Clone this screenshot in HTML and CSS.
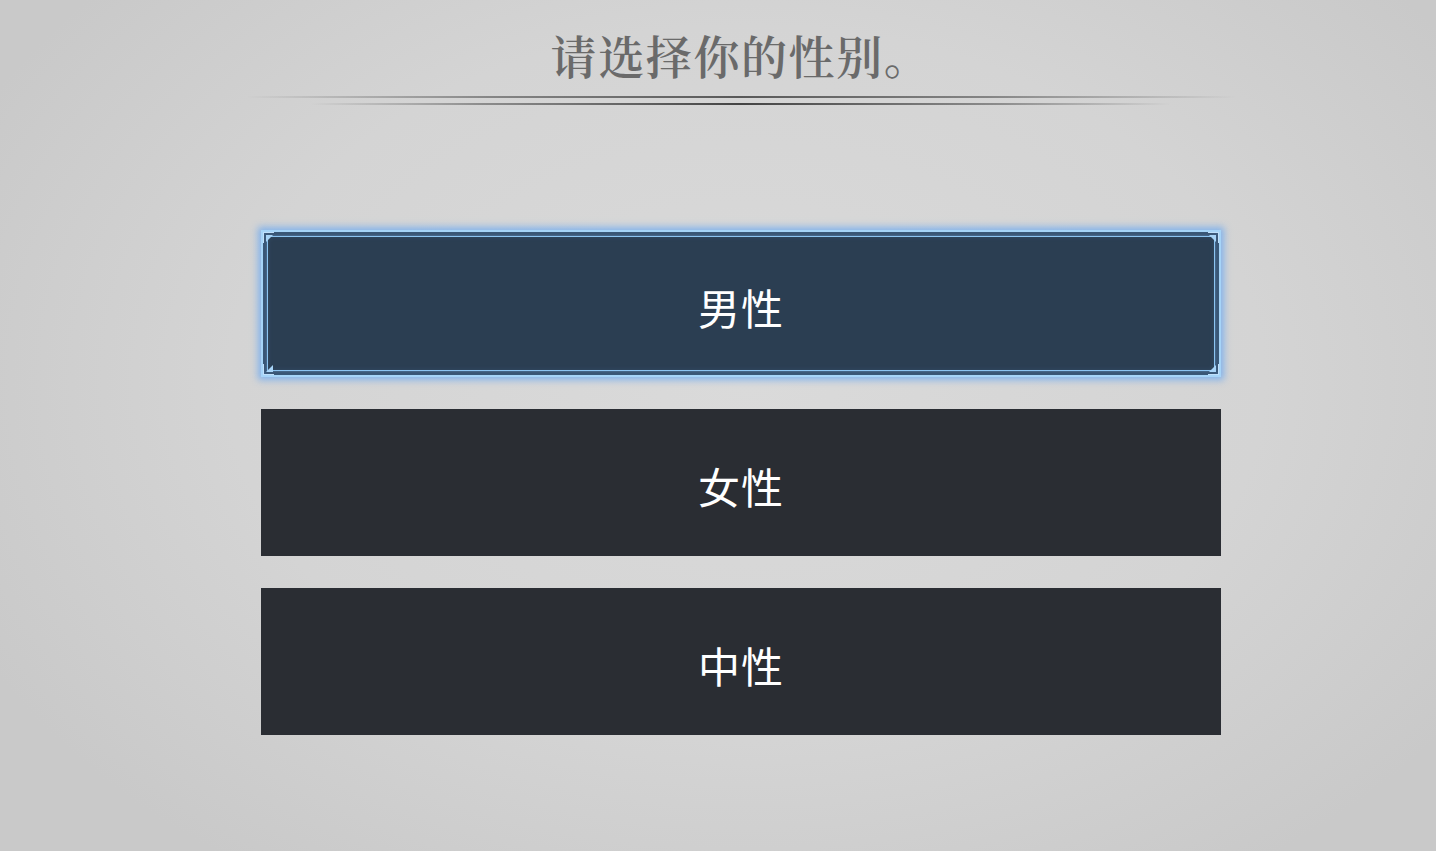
FILE: index.html
```html
<!DOCTYPE html>
<html lang="zh-CN">
<head>
<meta charset="utf-8">
<title>请选择你的性别</title>
<link rel="stylesheet" href="styles.css">
</head>
<body>
<div class="page">
  <header class="head">
    <h1 class="title">请选择你的性别。</h1>
    <div class="divider">
      <div class="line line-top"></div>
      <div class="line line-bottom"></div>
    </div>
  </header>
  <main class="options">
    <div class="option selected">
      <span class="frame"></span>
      <span class="corner tl"></span>
      <span class="corner tr"></span>
      <span class="corner bl"></span>
      <span class="corner br"></span>
      <span class="label">男性</span>
    </div>
    <div class="option"><span class="label">女性</span></div>
    <div class="option"><span class="label">中性</span></div>
  </main>
</div>
</body>
</html>
```
FILE: styles.css
```css
html, body {
  margin: 0;
  padding: 0;
  height: 100%;
}
body {
  background: radial-gradient(ellipse 60% 70% at 52% 45%, #dadada 0%, #d4d4d4 60%, #c9c9c9 100%);
  font-family: "Noto Sans CJK SC", "Noto Sans", sans-serif;
  overflow: hidden;
}
.page {
  width: 1436px;
  height: 851px;
  box-sizing: border-box;
  padding-left: 46px;
  display: flex;
  flex-direction: column;
  align-items: center;
}
.head {
  display: flex;
  flex-direction: column;
  align-items: center;
  width: 100%;
}
.title {
  margin: 24px 0 0 0;
  height: 60px;
  line-height: 60px;
  font-family: "Noto Serif CJK SC", "Noto Serif CJK", "Noto Sans CJK SC", serif;
  font-size: 46px;
  font-weight: 600;
  color: #6a6a6a;
  letter-spacing: 1.6px;
}
.divider {
  width: 100%;
  display: flex;
  flex-direction: column;
  align-items: center;
  gap: 5px;
  margin-top: 12px;
}
.line {
  height: 2px;
}
.line-top {
  width: 990px;
  background: linear-gradient(90deg, rgba(90,90,90,0) 0%, rgba(90,90,90,0.65) 25%, rgba(75,75,75,0.9) 50%, rgba(90,90,90,0.65) 75%, rgba(90,90,90,0) 100%);
}
.line-bottom {
  width: 860px;
  background: linear-gradient(90deg, rgba(80,80,80,0) 0%, rgba(80,80,80,0.55) 20%, rgba(60,60,60,0.95) 50%, rgba(80,80,80,0.55) 80%, rgba(80,80,80,0) 100%);
}
.options {
  margin-top: 125px;
  display: flex;
  flex-direction: column;
  gap: 32px;
}
.option {
  position: relative;
  width: 960px;
  height: 147px;
  background: #2a2d33;
  display: flex;
  align-items: center;
  justify-content: center;
  box-sizing: border-box;
}
.label {
  color: #ffffff;
  font-size: 42px;
  letter-spacing: 1px;
  position: relative;
  top: 3px;
}
.option.selected {
  background: #2b3e52;
  border: 2px solid #a6d4f8;
  box-shadow: 0 0 7px 3px rgba(110, 170, 240, 0.8), inset 0 0 8px rgba(110, 170, 240, 0.55);
}
.frame {
  position: absolute;
  left: 4px;
  right: 4px;
  top: 4px;
  bottom: 4px;
  border: 1px solid #8cc4f2;
  box-shadow: 0 0 3px rgba(120, 180, 240, 0.7);
  pointer-events: none;
}
.corner {
  position: absolute;
  width: 11px;
  height: 11px;
  border: 1px solid #c0e0fb;
  box-sizing: border-box;
}
.corner::after {
  content: "";
  position: absolute;
  width: 0;
  height: 0;
}
.corner.tl { left: 0; top: 0; border-right: none; border-bottom: none; }
.corner.tl::after { left: 2px; top: 2px; border-top: 7px solid #a8d4f8; border-right: 7px solid transparent; }
.corner.tr { right: 0; top: 0; border-left: none; border-bottom: none; }
.corner.tr::after { right: 2px; top: 2px; border-top: 7px solid #a8d4f8; border-left: 7px solid transparent; }
.corner.bl { left: 0; bottom: 0; border-right: none; border-top: none; }
.corner.bl::after { left: 2px; bottom: 2px; border-bottom: 7px solid #a8d4f8; border-left: 7px solid transparent; }
.corner.br { right: 0; bottom: 0; border-left: none; border-top: none; }
.corner.br::after { right: 2px; bottom: 2px; border-bottom: 7px solid #a8d4f8; border-left: 7px solid transparent; }
```
